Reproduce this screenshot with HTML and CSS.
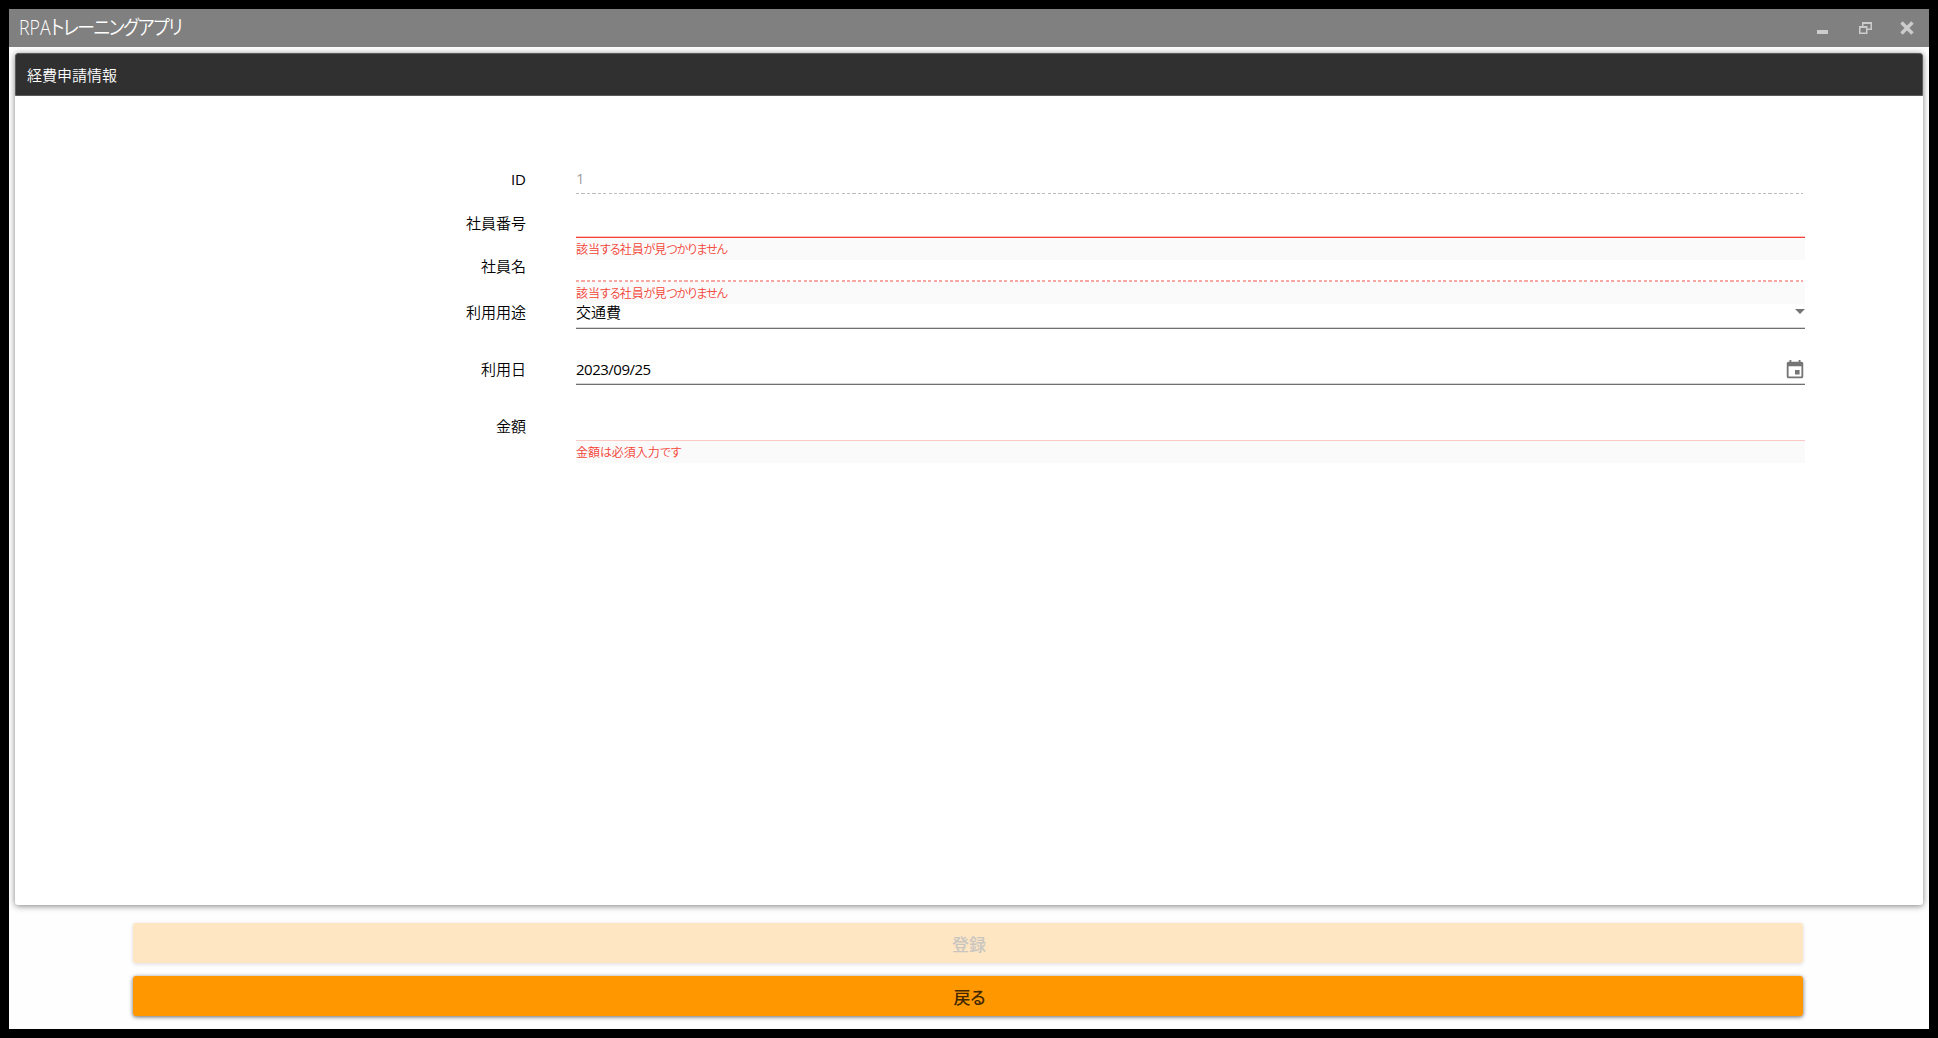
FILE: index.html
```html
<!DOCTYPE html>
<html lang="ja">
<head>
<meta charset="utf-8">
<title>RPAトレーニングアプリ</title>
<link rel="stylesheet" href="styles.css">
</head>
<body>
<div class="window">
  <header class="titlebar">
    <h1 class="title">RPA<span class="title-kana">トレーニングアプリ</span></h1>
    <div class="controls">
      <svg width="14" height="14" viewBox="0 0 14 14"><path fill="#ccc" d="M1 9h11v4H1z"/></svg>
      <svg width="14" height="14" viewBox="0 0 14 14"><path fill="#ccc" fill-rule="evenodd" d="M4 1h10v8H9.500v4H1V5h3zM5.500 3v2H9.500v2.500h3V3zM2.500 7v4.500H8V7z"/></svg>
      <svg width="14" height="14" viewBox="0 0 14 14"><path stroke="#ccc" stroke-width="3.400" d="M1.500 1.500l11 11M12.500 1.500l-11 11"/></svg>
    </div>
  </header>
  <main class="card">
    <h2 class="card-head">経費申請情報</h2>
    <div class="form">
      <div class="row">
        <div class="label">ID</div>
        <div class="field disabled"><span class="value">1</span></div>
      </div>
      <div class="row">
        <div class="label">社員番号</div>
        <div class="field invalid"><div class="helper"><span>該当</span><span class="kana">する</span><span>社員</span><span class="kana">が</span><span>見</span><span class="kana">つかりません</span></div></div>
      </div>
      <div class="row row-name">
        <div class="label">社員名</div>
        <div class="field invalid-disabled"><div class="helper"><span>該当</span><span class="kana">する</span><span>社員</span><span class="kana">が</span><span>見</span><span class="kana">つかりません</span></div></div>
      </div>
      <div class="row row-use">
        <div class="label">利用用途</div>
        <div class="field active"><span class="value">交通費</span>
          <svg class="arrow" width="10" height="5" viewBox="0 0 10 5"><path fill="#757575" d="M0 0h10L5 5z"/></svg>
        </div>
      </div>
      <div class="row row-date">
        <div class="label">利用日</div>
        <div class="field active"><span class="value date">2023/09/25</span>
          <svg class="calendar" width="22" height="22" viewBox="0 0 24 24"><path fill="#757575" d="M17 12h-5v5h5v-5zM16 1v2H8V1H6v2H5c-1.110 0-1.990.9-1.990 2L3 19a2 2 0 0 0 2 2h14c1.100 0 2-.9 2-2V5c0-1.100-.9-2-2-2h-1V1h-2zm3 18H5V8h14v11z"/></svg>
        </div>
      </div>
      <div class="row">
        <div class="label">金額</div>
        <div class="field required"><div class="helper"><span>金額</span><span class="kana-wide">は</span><span>必須入力</span><span class="kana-wide">です</span></div></div>
      </div>
    </div>
  </main>
  <footer class="actions">
    <button class="button" disabled>登録</button>
    <button class="button">戻<span class="button-kana">る</span></button>
  </footer>
</div>
</body>
</html>
```
FILE: styles.css
```css
* { box-sizing: border-box; }
body {
  margin: 0;
  height: 1038px;
  padding: 9px;
  background: #000;
  color: #000;
  font: 400 15px/20px "Open Sans", "Noto Sans CJK JP DemiLight", "Noto Sans CJK JP", sans-serif;
}
.window {
  height: 1020px;
  display: flex;
  flex-direction: column;
  background: #fefefe;
  overflow: hidden;
}
.titlebar {
  height: 38px;
  flex: none;
  display: flex;
  align-items: center;
  justify-content: space-between;
  padding: 0 15px 0 10px;
  background: #808080;
  color: #fff;
}
.title {
  margin: 0;
  font-size: 20px;
  line-height: 37px;
  height: 38px;
  font-weight: 300;
  white-space: nowrap;
  transform: scaleX(.89);
  transform-origin: left center;
}
.title-kana { font-feature-settings: "palt"; letter-spacing: -1.5px; }
.controls { display: flex; gap: 28px; }
.controls svg { display: block; }
.card {
  height: 852px;
  flex: none;
  margin: 6px 6px 0;
  border-radius: 3px;
  background: #fff;
  box-shadow: 0 1px 6px rgba(0, 0, 0, .5);
}
.card-head {
  margin: 0;
  height: 43px;
  padding: 0 11px;
  border: 1px solid #5a5a5a;
  border-radius: 3px 3px 0 0;
  background: #303030;
  color: #fff;
  font-size: 15px;
  line-height: 42px;
  font-weight: 400;
}
.form { padding: 70px 118px 0 411px; }
.row {
  height: 44px;
  display: grid;
  grid-template-columns: 100px 1229px;
  column-gap: 50px;
  align-items: start;
}
.row-name { height: 47px; }
.row-use, .row-date { height: 56px; }
.label { text-align: right; line-height: 26px; white-space: nowrap; }
.row-name .label { line-height: 24px; }
.row-use .label, .row-use .value { line-height: 22px; }
.row-date .label, .row-date .value { line-height: 25px; }
.field {
  position: relative;
  height: 28px;
  display: flex;
  justify-content: space-between;
  align-items: flex-start;
}
.value { line-height: 25px; }
.date { font-size: 15px; letter-spacing: -.5px; }
.disabled { color: #a0a0a0; }
.disabled::after, .invalid-disabled::after {
  content: "";
  position: absolute;
  left: 0;
  right: 2px;
  bottom: 0;
  height: 1px;
  background: repeating-linear-gradient(90deg, #bdbdbd 0 3.3px, transparent 3.3px 5.42px);
}
.invalid-disabled::after {
  height: 2px;
  background: repeating-linear-gradient(90deg, #f8a8a2 0 3.1px, transparent 3.1px 5.42px);
}
.invalid { border-bottom: 1px solid #f44336; box-shadow: inset 0 -1px #fcc4bf; }
.required { border-bottom: 1px solid #fccac6; }
.active { border-bottom: 1px solid #707070; box-shadow: inset 0 -1px #d5d5d5; }
.helper {
  position: absolute;
  top: 28px;
  left: 0;
  width: 100%;
  height: 22px;
  background: #fafafa;
  color: #f44336;
  font-size: 12px;
  line-height: 23px;
  font-weight: 400;
  white-space: nowrap;
}
.kana { font-feature-settings: "palt"; letter-spacing: -1px; }
.kana-wide { font-feature-settings: "palt"; letter-spacing: -.2px; }
.arrow { margin-top: 8px; }
.calendar { margin: 2px -1px 0 0; }
.actions {
  display: flex;
  flex-direction: column;
  gap: 13px;
  padding: 18px 126px 0 124px;
}
.button {
  height: 40px;
  padding: 2px 0 0 2px;
  border: 0;
  border-radius: 3px;
  background: #ff9800;
  color: #432800;
  box-shadow: 0 1px 4px rgba(0, 0, 0, .6);
  font: 500 17px/38px "Noto Sans CJK JP", sans-serif;
}
.button-kana { font-feature-settings: "palt"; letter-spacing: -1px; }
.button:disabled {
  background: #ffe6c3;
  color: #c8c5c0;
  box-shadow: 0 1px 4px rgba(0, 0, 0, .14);
}
```
